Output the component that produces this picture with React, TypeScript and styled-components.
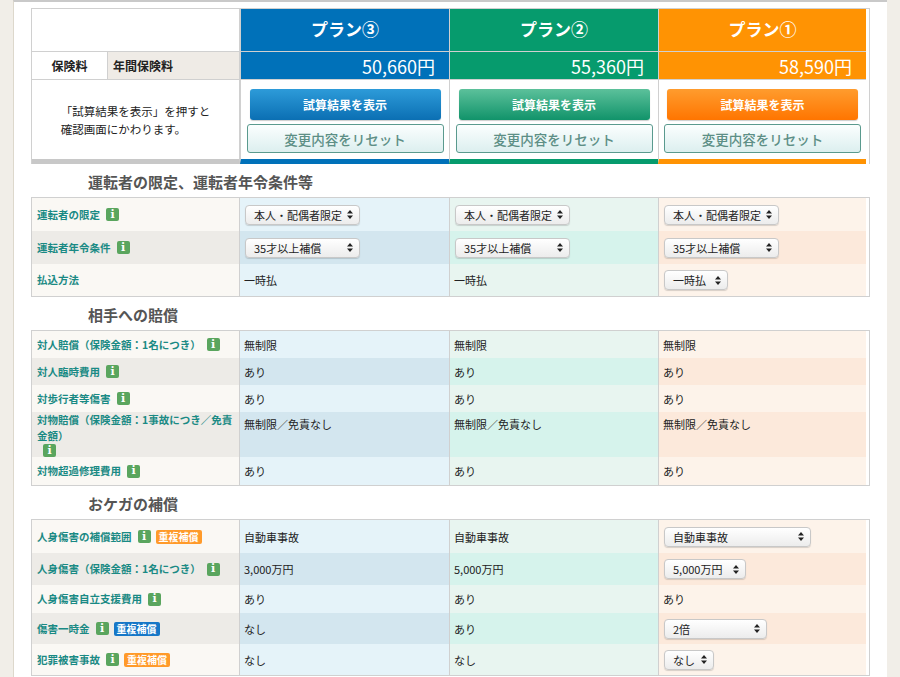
import React from "react";
import styled, { createGlobalStyle } from "styled-components";

const Global = createGlobalStyle`
  html, body { margin: 0; padding: 0; background: #f1eee8; }
  body { font-family: "Noto Sans CJK JP", "Liberation Sans", sans-serif; color: #222; }
`;

type Plan = "p3" | "p2" | "p1";
const main: Record<Plan, string> = { p3: "#0071b9", p2: "#069b6d", p1: "#ff9303" };
const grad: Record<Plan, [string, string]> = {
  p3: ["#2d9bd9", "#0b6fb3"],
  p2: ["#5cc19b", "#11936a"],
  p1: ["#ff9c2e", "#ff7500"],
};
const cellBg: Record<Plan, [string, string]> = {
  p3: ["#e5f3f9", "#d3e6ef"],
  p2: ["#e8f5f0", "#d6f3ec"],
  p1: ["#fdf3ea", "#fce9db"],
};
const plans: Plan[] = ["p3", "p2", "p1"];
const cols = "208px 209px 209px 208px";

const Page = styled.div`
  margin: 0 13px;
  background: #fff;
  border-left: 1px solid #ddd8cc;
  border-top: 2px solid #c9c9c9;
  min-height: 677px;
  padding: 6px 17px 0 17px;
`;
const Grid = styled.div`
  display: grid;
  grid-template-columns: ${cols};
  border: 1px solid #d0d0d0;
  border-bottom: none;
`;
const Blank = styled.div`
  border-right: 1px solid #d0d0d0;
  border-bottom: 1px solid #d0d0d0;
  background: #fff;
`;
const PlanHead = styled.div<{ $p: Plan }>`
  height: 43px;
  background: ${(p) => main[p.$p]};
  color: #fff;
  font-size: 17px;
  font-weight: 700;
  display: flex;
  align-items: center;
  justify-content: center;
  padding-bottom: 4px;
  box-sizing: border-box;
  border-left: 1px solid #d0d0d0;
  border-bottom: 1px solid #d0d0d0;
`;
const PremiumRow = styled.div`
  display: grid;
  grid-template-columns: 75px 1fr;
  border-right: 1px solid #d0d0d0;
  border-bottom: 1px solid #d0d0d0;
  font-size: 12px;
  font-weight: 700;
`;
const PremiumCell = styled.div<{ $bg: string; $center?: boolean }>`
  background: ${(p) => p.$bg};
  display: flex;
  align-items: center;
  justify-content: ${(p) => (p.$center ? "center" : "flex-start")};
  padding-left: ${(p) => (p.$center ? 0 : "5px")};
  border-left: ${(p) => (p.$center ? "none" : "1px solid #d0d0d0")};
`;
const Price = styled.div<{ $p: Plan }>`
  height: 27px;
  background: ${(p) => main[p.$p]};
  color: #fff;
  font-size: 18px;
  display: flex;
  align-items: center;
  justify-content: flex-end;
  padding-right: 14px;
  border-left: 1px solid #d0d0d0;
  border-bottom: 1px solid #d0d0d0;
`;
const Note = styled.div`
  border-right: 1px solid #d0d0d0;
  border-bottom: 5px solid #c8c8c8;
  font-size: 11.5px;
  line-height: 18px;
  display: flex;
  align-items: center;
  justify-content: center;
  height: 84px;
  box-sizing: border-box;
`;
const BtnCell = styled.div<{ $p: Plan }>`
  border-bottom: 5px solid ${(p) => main[p.$p]};
  border-left: 1px solid #d0d0d0;
  height: 84px;
  box-sizing: border-box;
  display: flex;
  flex-direction: column;
  align-items: center;
  gap: 4px;
  padding-top: 9px;
`;
const ShowBtn = styled.div<{ $p: Plan }>`
  width: 191px;
  height: 31px;
  border-radius: 3px;
  background: linear-gradient(${(p) => grad[p.$p][0]}, ${(p) => grad[p.$p][1]});
  color: #fff;
  font-weight: 700;
  font-size: 12px;
  display: flex;
  align-items: center;
  justify-content: center;
  box-shadow: 0 1px 1px rgba(0,0,0,0.2);
`;
const ResetBtn = styled.div`
  width: 195px;
  height: 27px;
  border: 1px solid #5a9a8e;
  border-radius: 3px;
  background: linear-gradient(#fbfefe, #dcefef);
  color: #5d8f86;
  font-size: 13.5px;
  font-weight: 500;
  display: flex;
  align-items: center;
  justify-content: center;
`;
const SectionTitle = styled.div`
  font-size: 15px;
  font-weight: 700;
  color: #555;
  padding: 7px 0 5px 57px;
`;
const Table = styled.div`
  display: grid;
  grid-template-columns: ${cols};
  border: 1px solid #d0d0d0;
`;
const Label = styled.div<{ $alt: boolean; $h: number }>`
  background: ${(p) => (p.$alt ? "#edebe7" : "#faf8f4")};
  min-height: ${(p) => p.$h}px;
  color: #1a8a84;
  font-weight: 700;
  font-size: 10.5px;
  line-height: 16px;
  padding: 0 5px;
  display: flex;
  align-items: center;
  flex-wrap: wrap;
  border-right: 1px solid #d0d0d0;
`;
const Cell = styled.div<{ $p: Plan; $alt: boolean; $top?: boolean }>`
  background: ${(p) => cellBg[p.$p][p.$alt ? 1 : 0]};
  font-size: 11px;
  padding: ${(p) => (p.$top ? "4px 4px 0" : "0 4px")};
  display: flex;
  align-items: ${(p) => (p.$top ? "flex-start" : "center")};
  border-left: ${(p) => (p.$p === "p3" ? "none" : "1px solid #d0d0d0")};
`;
const Info = styled.span`
  display: inline-flex;
  width: 13px;
  height: 13px;
  background: #5aa55e;
  border-radius: 2px;
  color: #fff;
  font-size: 11px;
  font-family: "DejaVu Serif", serif;
  font-weight: 700;
  align-items: center;
  justify-content: center;
  margin-left: 6px;
`;
const Badge = styled.span<{ $blue?: boolean }>`
  display: inline-flex;
  align-items: center;
  height: 14px;
  padding: 0 3px;
  margin-left: 5px;
  border-radius: 2px;
  font-size: 10px;
  color: #fff;
  background: ${(p) => (p.$blue ? "#1677c7" : "#ff9a2a")};
`;
const Select = styled.div<{ $w: number }>`
  width: ${(p) => p.$w}px;
  height: 20px;
  box-sizing: border-box;
  border: 1px solid #c8c8c8;
  border-radius: 4px;
  background: linear-gradient(#ffffff, #ececec);
  box-shadow: 0 1px 1px rgba(0,0,0,0.15);
  font-size: 11px;
  display: flex;
  align-items: center;
  justify-content: space-between;
  padding: 0 6px 0 8px;
  margin-left: 1px;
`;
const Arrows = () => (
  <svg width="6" height="9" viewBox="0 0 6 9">
    <path d="M0 3.5L3 0 6 3.5zM0 5.5L3 9 6 5.5z" fill="#222" />
  </svg>
);

type V = string | { sel: string; w: number };
type Row = { label: React.ReactNode; h: number; vals: [V, V, V]; top?: boolean };

const S = (sel: string, w: number) => ({ sel, w });

const sections: { title: string; rows: Row[] }[] = [
  {
    title: "運転者の限定、運転者年令条件等",
    rows: [
      { label: <>運転者の限定<Info>i</Info></>, h: 33, vals: [S("本人・配偶者限定", 115), S("本人・配偶者限定", 115), S("本人・配偶者限定", 115)] },
      { label: <>運転者年令条件<Info>i</Info></>, h: 33, vals: [S("35才以上補償", 115), S("35才以上補償", 115), S("35才以上補償", 115)] },
      { label: <>払込方法</>, h: 32, vals: ["一時払", "一時払", S("一時払", 64)] },
    ],
  },
  {
    title: "相手への賠償",
    rows: [
      { label: <>対人賠償（保険金額：1名につき）<Info>i</Info></>, h: 27, vals: ["無制限", "無制限", "無制限"] },
      { label: <>対人臨時費用<Info>i</Info></>, h: 27, vals: ["あり", "あり", "あり"] },
      { label: <>対歩行者等傷害<Info>i</Info></>, h: 27, vals: ["あり", "あり", "あり"] },
      { label: <>対物賠償（保険金額：1事故につき／免責金額）<Info>i</Info></>, h: 42, top: true, vals: ["無制限／免責なし", "無制限／免責なし", "無制限／免責なし"] },
      { label: <>対物超過修理費用<Info>i</Info></>, h: 28, vals: ["あり", "あり", "あり"] },
    ],
  },
  {
    title: "おケガの補償",
    rows: [
      { label: <>人身傷害の補償範囲<Info>i</Info><Badge>重複補償</Badge></>, h: 33, vals: ["自動車事故", "自動車事故", S("自動車事故", 147)] },
      { label: <>人身傷害（保険金額：1名につき）<Info>i</Info></>, h: 32, vals: ["3,000万円", "5,000万円", S("5,000万円", 82)] },
      { label: <>人身傷害自立支援費用<Info>i</Info></>, h: 28, vals: ["あり", "あり", "あり"] },
      { label: <>傷害一時金<Info>i</Info><Badge $blue>重複補償</Badge></>, h: 31, vals: ["なし", "あり", S("2倍", 103)] },
      { label: <>犯罪被害事故<Info>i</Info><Badge>重複補償</Badge></>, h: 31, vals: ["なし", "なし", S("なし", 50)] },
    ],
  },
];

export default function App() {
  return (
    <>
      <Global />
      <Page>
        <Grid>
          <Blank />
          {plans.map((p, i) => (
            <PlanHead key={p} $p={p}>プラン{["③", "②", "①"][i]}</PlanHead>
          ))}
          <PremiumRow>
            <PremiumCell $bg="#fff" $center>保険料</PremiumCell>
            <PremiumCell $bg="#efebe6">年間保険料</PremiumCell>
          </PremiumRow>
          {plans.map((p, i) => (
            <Price key={p} $p={p}>{["50,660円", "55,360円", "58,590円"][i]}</Price>
          ))}
          <Note>
            <div>「試算結果を表示」を押すと<br />確認画面にかわります。</div>
          </Note>
          {plans.map((p) => (
            <BtnCell key={p} $p={p}>
              <ShowBtn $p={p}>試算結果を表示</ShowBtn>
              <ResetBtn>変更内容をリセット</ResetBtn>
            </BtnCell>
          ))}
        </Grid>
        {sections.map((s) => (
          <div key={s.title}>
            <SectionTitle>{s.title}</SectionTitle>
            <Table>
              {s.rows.map((r, ri) => (
                <React.Fragment key={ri}>
                  <Label $alt={ri % 2 === 1} $h={r.h}>{r.label}</Label>
                  {r.vals.map((v, vi) => (
                    <Cell key={vi} $p={plans[vi]} $alt={ri % 2 === 1} $top={r.top}>
                      {typeof v === "string" ? v : (
                        <Select $w={v.w}><span>{v.sel}</span><Arrows /></Select>
                      )}
                    </Cell>
                  ))}
                </React.Fragment>
              ))}
            </Table>
          </div>
        ))}
      </Page>
    </>
  );
}
